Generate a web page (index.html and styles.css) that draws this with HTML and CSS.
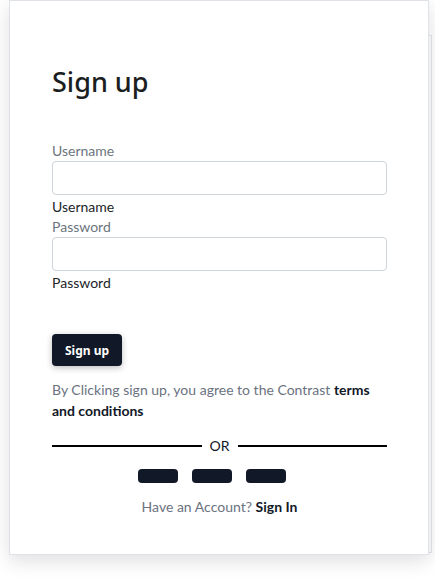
FILE: index.html
```html
<!DOCTYPE html>
<html lang="en">
<head>
<meta charset="utf-8">
<title>Sign up</title>
<link rel="stylesheet" href="styles.css">
</head>
<body>
<div class="backdrop"></div>
<main class="card">
  <h1 class="title">Sign up</h1>
  <form class="form">
    <label class="label" for="username">Username</label>
    <input class="input" id="username" type="text">
    <div class="hint">Username</div>
    <label class="label" for="password">Password</label>
    <input class="input" id="password" type="password">
    <div class="hint">Password</div>
    <div class="actions"><button class="btn" type="button">Sign up</button></div>
  </form>
  <p class="terms">By Clicking sign up, you agree to the Contrast <strong>terms</strong><br><strong>and conditions</strong></p>
  <div class="divider"><span class="rule"></span><span class="or">OR</span><span class="rule"></span></div>
  <div class="socials"><span class="pill"></span><span class="pill"></span><span class="pill"></span></div>
  <p class="signin">Have an Account? <a class="link" href="#">Sign In</a></p>
</main>
</body>
</html>
```
FILE: styles.css
```css
* { box-sizing: border-box; }
html, body { margin: 0; padding: 0; background: #fff; }
body {
  font-family: "Lato", "Noto Sans", sans-serif;
  font-size: 14px;
  line-height: 21px;
  color: #212529;
  position: relative;
  height: 580px;
  overflow: hidden;
}
.backdrop {
  position: absolute;
  top: 35px;
  left: 300px;
  width: 132px;
  height: 518px;
  border: 1px solid #e3e6ea;
  background: #fff;
}
.card {
  position: relative;
  margin-left: 9px;
  width: 420px;
  height: 555px;
  background: #fff;
  border: 1px solid #dfe3e8;
  box-shadow: 0 6px 18px rgba(0, 0, 0, 0.13);
  padding: 64px 41px 0 42px;
}
.title {
  margin: 0;
  font-family: "Noto Sans", sans-serif;
  font-size: 27px;
  line-height: 34px;
  font-weight: 500;
  color: #1b1e21;
}
.form {
  margin-top: 42px;
  display: flex;
  flex-direction: column;
}
.label {
  color: #6c757d;
  line-height: 20px;
}
.input {
  height: 34px;
  border: 1px solid #ced4da;
  border-radius: 4px;
  width: 100%;
  font: inherit;
  padding: 4px 8px;
  background: #fff;
}
.hint {
  color: #212529;
  margin-top: 1px;
  line-height: 21px;
}
.actions { margin-top: 41px; }
.btn {
  height: 32px;
  padding: 0 13px;
  border: 0;
  border-radius: 4px;
  background: #111827;
  color: #fff;
  font-family: "Noto Sans", sans-serif;
  font-size: 12px;
  font-weight: 700;
  box-shadow: 0 2px 6px rgba(0, 0, 0, 0.25);
}
.terms {
  margin: 13px 0 0;
  color: #6b7280;
}
.terms strong { color: #111827; font-weight: 700; }
.divider {
  margin-top: 14px;
  display: flex;
  align-items: center;
  gap: 8px;
}
.rule { flex: 1; height: 2px; background: #000; }
.or { color: #111827; }
.socials {
  margin-top: 13px;
  padding-right: 15px;
  display: flex;
  justify-content: center;
  gap: 14px;
}
.pill {
  width: 40px;
  height: 14px;
  border-radius: 4px;
  background: #111827;
}
.signin {
  margin: 13px 0 0;
  text-align: center;
  color: #6b7280;
}
.link { color: #111827; font-weight: 700; text-decoration: none; }
```
